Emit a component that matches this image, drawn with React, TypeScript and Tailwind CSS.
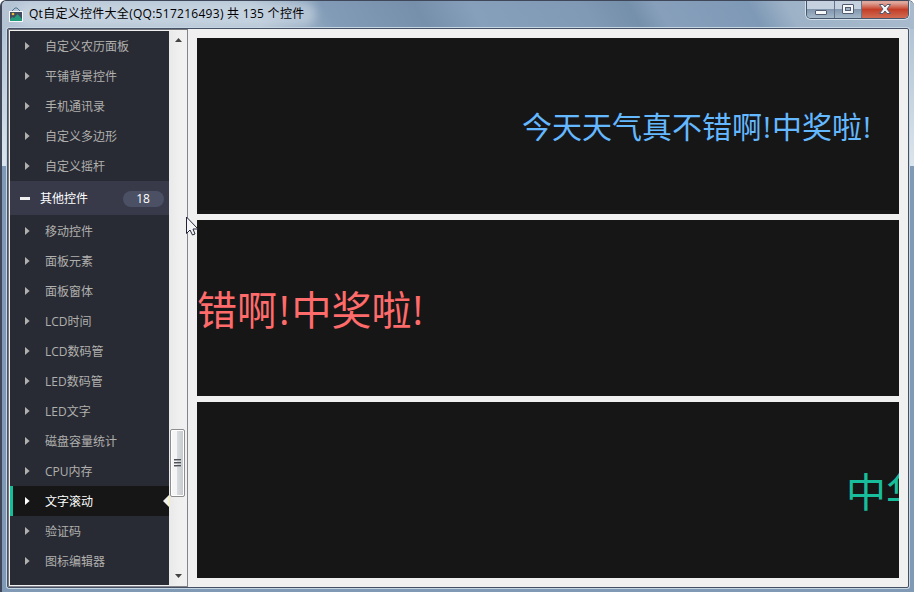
const before = ['自定义农历面板', '平铺背景控件', '手机通讯录', '自定义多边形', '自定义摇杆'];
const after = [
  '移动控件', '面板元素', '面板窗体', 'LCD时间', 'LCD数码管', 'LED数码管',
  'LED文字', '磁盘容量统计', 'CPU内存', '文字滚动', '验证码', '图标编辑器',
];

function Item({ label }: { label: string }) {
  const on = label === '文字滚动';
  return (
    <li className={`relative flex h-[30px] shrink-0 items-center ${on ? 'bg-[#161616] text-white' : 'text-[#b0b0ae]'}`}>
      {on && <span className="absolute left-0 h-full w-[3px] bg-[#16bd9b]" />}
      <svg className="ml-[15px] h-[8px] w-[5px]" viewBox="0 0 5 8"><path d="M0 0L4.6 4L0 8Z" fill="currentColor" /></svg>
      <span className="ml-[15px] pt-[2px] leading-4">{label}</span>
      {on && <svg className="absolute right-0 h-3 w-1.5" viewBox="0 0 6 12"><path d="M6 0L0 6L6 12Z" fill="#f0f0f0" /><path d="M5 1H6V11H5Z" fill="#fbf7a8" /></svg>}
    </li>
  );
}

function TitleBar() {
  return (
    <header className="relative flex h-[27px] items-center pb-px pl-[7px]">
      <svg className="h-[15px] w-[14px]" viewBox="0 0 14 15">
        <path d="M3 4L6 1H8L11 4" fill="none" stroke="#51758b" />
        <rect x="0.5" y="4.5" width="13" height="10" fill="#424b60" stroke="#f7f9f8" />
        <circle cx="4" cy="7" r="1.3" fill="#e9bf32" />
        <path d="M1 14V12L3.5 10L5 11L8.5 7L13 12V14Z" fill="#239a79" />
      </svg>
      <h1 className="relative ml-[6px] text-[12px] leading-4 tracking-[0.28px] whitespace-nowrap text-black">
        <span className="absolute -inset-x-3 -inset-y-1 -z-10 rounded-full bg-[#d5dfea]/50 blur-[4px]" />
        Qt自定义控件大全(QQ:517216493) 共 135 个控件
      </h1>
      <div className="absolute top-0 right-[5px] flex h-[18px] overflow-hidden rounded-b-[5px] border border-t-0 border-[#46566c] shadow-[0_0_0_1px_#d3dfe9]">
        <div className="flex w-[28px] items-center justify-center border-r border-[#64758b] bg-linear-to-b from-[#c5d1df] from-45% via-[#8296ad] via-50% to-[#a6b9ca] pt-[5px]">
          <svg className="h-[5px] w-3" viewBox="0 0 12 5"><rect x=".5" y=".5" width="11" height="4" rx=".5" fill="#f6f7f8" stroke="#535b70" /></svg>
        </div>
        <div className="flex w-[27px] items-center justify-center border-r border-[#64758b] bg-linear-to-b from-[#c5d1df] from-45% via-[#8296ad] via-50% to-[#a6b9ca] pb-px">
          <svg className="h-[10px] w-3" viewBox="0 0 12 10"><rect x=".5" y=".5" width="11" height="9" rx=".5" fill="#f6f7f8" stroke="#535b70" /><rect x="3.5" y="3.5" width="5" height="3" fill="#9eb0c3" stroke="#535b70" /></svg>
        </div>
        <div className="flex w-[46px] items-center justify-center bg-linear-to-b from-[#dfa69b] from-10% via-[#c33d27] via-50% to-[#cf6b52] pb-px">
          <svg className="h-[10px] w-3" viewBox="0 0 12 10"><path d="M.5 .5H4L6 3L8 .5H11.5L8 5L11.5 9.5H8L6 7L4 9.5H.5L4 5Z" fill="#f6f7f8" stroke="#535b70" /></svg>
        </div>
      </div>
    </header>
  );
}

function ScrollBar() {
  return (
    <div className="relative flex w-[18px] flex-col items-center justify-between bg-linear-to-r from-[#e9e9e9] via-[#efefef] to-[#f1f1f1] py-[7px]">
      <svg className="h-[4px] w-[7px]" viewBox="0 0 7 4"><path d="M0 4L3.5 0L7 4Z" fill="#444" /></svg>
      <div className="absolute top-[398px] left-[1px] flex h-[68px] w-[15px] flex-col items-center justify-center gap-px rounded-[2px] border border-[#8d8d8f] bg-linear-to-r from-[#f5f5f5] from-45% via-[#d9dadd] via-50% to-[#c2c6ce] shadow-[inset_0_0_0_1px_#fff]">
        {[0, 1, 2].map((i) => <span key={i} className="h-[2px] w-[7px] border-t border-[#4e5158] bg-[#a6a8ac]" />)}
      </div>
      <svg className="h-[4px] w-[7px]" viewBox="0 0 7 4"><path d="M0 0L3.5 4L7 0Z" fill="#444" /></svg>
    </div>
  );
}

export default function App() {
  return (
    <div className="relative isolate flex h-[592px] w-[914px] flex-col overflow-hidden rounded-t-[6px] border-t border-l-2 border-[#3f4758] bg-[#809ab5] font-['Open_Sans','Noto_Sans_CJK_SC',sans-serif] text-[12px]">
      <div className="absolute inset-0 -z-20 bg-linear-to-b from-[#a9bccf] via-[#dbe5ed] via-28% to-[#809ab5] to-28%" />
      <div className="absolute inset-x-0 top-0 -z-20 h-7 bg-[linear-gradient(60deg,#b4c4d5_0%,#b5c5d5_28%,#829cb7_36%,#7690ab_46%,#86a0bc_52%,#8099b4_64%,#7590ab_69%,#879fbb_72%,#7e99b6_82%,#9db2c7_86%,#a9bbcd_100%)]" />
      <TitleBar />
      <main className="mr-[5px] ml-[5px] flex h-[560px] rounded-[2px] border border-[#455064] bg-[#f0f0f0] shadow-[0_0_0_1px_#c5d5e2]">
        <aside className="flex h-full w-[180px] border-t border-r border-b border-l border-t-[#76777c] border-r-[#84858c] border-b-[#84858c] border-l-[#76777c] p-px pr-0">
          <ul className="flex w-[159px] flex-col overflow-hidden bg-[#292b34]">
            {before.map((t) => <Item key={t} label={t} />)}
            <li className="mb-px flex h-[34px] shrink-0 items-center bg-[#383a4a] text-white">
              <span className="ml-[10px] h-[3px] w-[10px] bg-[#f0f0f0]" />
              <span className="ml-[10px] pt-[2px] leading-4">其他控件</span>
              <span className="mt-[2px] mr-[5px] ml-auto h-4 w-[41px] rounded-full bg-[#4b5064] pr-px text-center leading-4">18</span>
            </li>
            {after.map((t) => <Item key={t} label={t} />)}
          </ul>
          <ScrollBar />
        </aside>
        <section className="flex flex-1 flex-col gap-[6px] pt-[9px] pr-[9px] pb-2 pl-[9px] whitespace-nowrap">
          <div className="flex h-[176px] items-center overflow-hidden bg-[#161616] pl-[325px] text-[30px] text-[#64b8ff]">今天天气真不错啊<span className="px-px">!</span>中奖啦<span className="pl-px">!</span></div>
          <div className="flex h-[176px] items-center overflow-hidden bg-[#161616] pt-[3px] text-[40px] text-[#ff6b6b]">错啊<span className="px-[2px]">!</span>中奖啦<span className="pl-px">!</span></div>
          <div className="flex h-[176px] w-[702px] items-center overflow-hidden bg-[#161616] pt-[3px] pl-[649px] text-[40px] text-[#18bd9b]">中华</div>
        </section>
      </main>
      <svg className="absolute top-[215px] left-[184px] h-[20px] w-[13px]" viewBox="0 0 13 20"><path d="M.5 1V17.5L4 14L6.5 19L9 18L7 13H12Z" fill="#f4f4f4" stroke="#22243a" /></svg>
    </div>
  );
}
